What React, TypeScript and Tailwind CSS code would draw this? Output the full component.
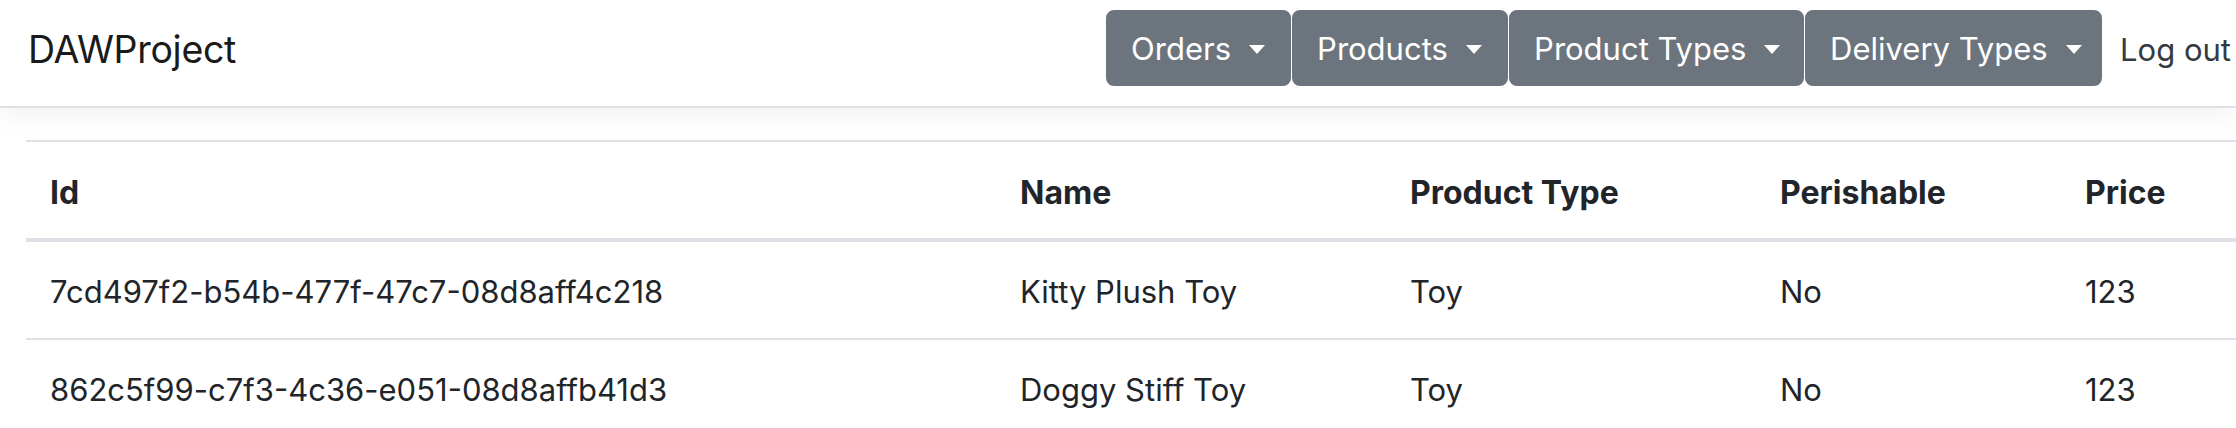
import React from "react";

type Product = {
  id: string;
  name: string;
  productType: string;
  perishable: string;
  price: string;
};

const products: Product[] = [
  {
    id: "7cd497f2-b54b-477f-47c7-08d8aff4c218",
    name: "Kitty Plush Toy",
    productType: "Toy",
    perishable: "No",
    price: "123",
  },
  {
    id: "862c5f99-c7f3-4c36-e051-08d8affb41d3",
    name: "Doggy Stiff Toy",
    productType: "Toy",
    perishable: "No",
    price: "123",
  },
];

const menus = [
  { label: "Orders", width: "w-[185px]" },
  { label: "Products", width: "w-[216px]" },
  { label: "Product Types", width: "w-[295px]" },
  { label: "Delivery Types", width: "w-[297px]" },
];

function DropdownButton({ label, width }: { label: string; width: string }) {
  return (
    <button
      className={`${width} h-[76px] flex items-center justify-start rounded-[8px] border-2 border-[#6c757d] bg-[#6c757d] pl-[23px] pt-[2px] text-[31px] text-white whitespace-nowrap`}
    >
      {label}
      {/* caret */}
      <span className="ml-[18px] inline-block w-0 h-0 shrink-0 border-x-[8px] border-t-[9px] border-x-transparent border-t-white" />
    </button>
  );
}

export default function App() {
  return (
    <div
      className="min-h-screen bg-white text-[#212529] overflow-hidden"
      style={{ fontFamily: 'Inter, "Liberation Sans", sans-serif' }}
    >
      {/* Navbar */}
      <nav className="h-[108px] flex items-start justify-between border-b-2 border-[#dee2e6] bg-white pl-[28px] pr-[5px] shadow-[0_8px_24px_rgba(0,0,0,0.05)]">
        <a className="mt-[20px] text-[37.5px] leading-[60px] text-[#1a1a1a] tracking-[-0.3px]">
          DAWProject
        </a>
        <div className="flex items-center mt-[10px]">
          <div className="flex gap-px">
            {menus.map((m) => (
              <DropdownButton key={m.label} label={m.label} width={m.width} />
            ))}
          </div>
          <a className="ml-[18px] pt-[3px] text-[31px] leading-[48px] text-[#343a40]">
            Log out
          </a>
        </div>
      </nav>

      {/* Table */}
      <div className="pl-[26px] pt-[32px]">
        <table className="w-full table-fixed border-collapse text-left text-[31px] leading-[48px]">
          <thead>
            <tr className="text-[32px]">
              <th className="w-[970px] border-t-2 border-b-4 border-[#dee2e6] px-[24px] pt-[27px] pb-[21px] font-bold">
                Id
              </th>
              <th className="w-[390px] border-t-2 border-b-4 border-[#dee2e6] px-[24px] pt-[27px] pb-[21px] font-bold">
                Name
              </th>
              <th className="w-[370px] border-t-2 border-b-4 border-[#dee2e6] px-[24px] pt-[27px] pb-[21px] font-bold">
                Product Type
              </th>
              <th className="w-[305px] border-t-2 border-b-4 border-[#dee2e6] px-[24px] pt-[27px] pb-[21px] font-bold">
                Perishable
              </th>
              <th className="border-t-2 border-b-4 border-[#dee2e6] px-[24px] pt-[27px] pb-[21px] font-bold">
                Price
              </th>
            </tr>
          </thead>
          <tbody>
            {products.map((p) => (
              <tr key={p.id}>
                <td className="border-t-2 border-[#dee2e6] px-[24px] pt-[26px] pb-[22px]">
                  {p.id}
                </td>
                <td className="border-t-2 border-[#dee2e6] px-[24px] pt-[26px] pb-[22px]">
                  {p.name}
                </td>
                <td className="border-t-2 border-[#dee2e6] px-[24px] pt-[26px] pb-[22px]">
                  {p.productType}
                </td>
                <td className="border-t-2 border-[#dee2e6] px-[24px] pt-[26px] pb-[22px]">
                  {p.perishable}
                </td>
                <td className="border-t-2 border-[#dee2e6] px-[24px] pt-[26px] pb-[22px]">
                  {p.price}
                </td>
              </tr>
            ))}
          </tbody>
        </table>
      </div>
    </div>
  );
}
